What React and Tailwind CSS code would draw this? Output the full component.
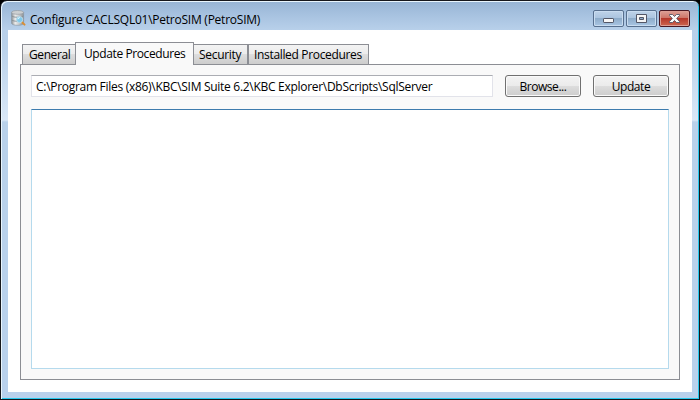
import React from 'react';

function DatabaseIcon() {
  return (
    <svg width="15" height="16" viewBox="0 0 15 16" className="shrink-0">
      <defs>
        <linearGradient id="cyl" x1="0" x2="1">
          <stop offset="0" stopColor="#8d9295" />
          <stop offset=".3" stopColor="#eceded" />
          <stop offset=".6" stopColor="#c9cccf" />
          <stop offset="1" stopColor="#8c9195" />
        </linearGradient>
      </defs>
      <path d="M.6 2.400v10.800c0 1.200 2.800 2.100 6 2.100s6-.9 6-2.100V2.400z" fill="url(#cyl)" stroke="#8896a2" strokeWidth=".7" />
      <ellipse cx="6.600" cy="2.400" rx="6" ry="1.900" fill="#cdd0d2" stroke="#959ca2" strokeWidth=".7" />
      <path d="M.8 6c1.500 1.700 10 1.700 11.600 0M.8 10c1.500 1.700 10 1.700 11.600 0" fill="none" stroke="#858c92" strokeWidth=".9" />
      <path d="M11 12.200l2.500 2.400" stroke="#d98f35" strokeWidth="2" strokeLinecap="round" />
      <circle cx="8.600" cy="9.600" r="3.100" fill="#7fcaec" stroke="#c3dce8" strokeWidth=".9" />
      <path d="M6.900 9.300a2 2 0 0 1 2-1.700" fill="none" stroke="#e9fbff" strokeWidth="1" />
    </svg>
  );
}

const captionBase = 'flex h-[17px] w-[31px] items-center justify-center rounded-[2px] border';
const captionBlue =
  'border-[#576f8e] bg-[linear-gradient(#bfd3e9_0%,#abc4df_46%,#8eacca_50%,#a9c6e4_100%)] shadow-[inset_0_0_0_1px_#c9dcf0]';

function CaptionButtons() {
  return (
    <div className="mt-[9px] flex gap-[2px]">
      <button className={`${captionBase} ${captionBlue}`}>
        <svg width="11" height="11" viewBox="0 0 11 11">
          <rect x=".5" y="5.500" width="10" height="4" rx=".6" fill="#f7f7f7" stroke="#535666" />
        </svg>
      </button>
      <button className={`${captionBase} ${captionBlue}`}>
        <svg width="11" height="9" viewBox="0 0 11 9">
          <path d="M.5 .5h10v8H.5zM3.500 3.500v2h4v-2z" fill="#f4f4f5" fillRule="evenodd" stroke="#535666" />
        </svg>
      </button>
      <button
        className={`${captionBase} border-[#481722] bg-[linear-gradient(#dda097_0%,#ce7568_46%,#b6382b_50%,#cd6650_100%)] shadow-[inset_0_0_0_1px_#dd9e94]`}
      >
        <svg width="11" height="9" viewBox="0 0 11 9">
          <path d="M.5 .5h3L5.500 2.500l2-2h3v1L7.700 4.500l2.800 3v1h-3l-2-2-2 2h-3v-1l2.800-3L.5 1.500z" fill="#fafafa" stroke="#535666" strokeWidth=".9" />
        </svg>
      </button>
    </div>
  );
}

const inactiveTab =
  '-mb-px h-[21px] border border-[#8c8e94] bg-[linear-gradient(#f3f3f3_0%,#ebebeb_50%,#dddddd_50%,#cdcdcd_100%)] pt-px leading-[17px] whitespace-nowrap';

function Tabs() {
  return (
    <div className="flex h-[22px] items-end pl-[2px]">
      <div className={`${inactiveTab} w-[54px] pl-[6px] tracking-[-0.4px]`}>General</div>
      <div className="relative z-10 -mb-px -ml-px h-[23px] w-[119px] border border-b-0 border-[#8c8e94] bg-[#f9f9f9] pt-[2px] pl-[8px] leading-[17px] tracking-[-0.4px] whitespace-nowrap">
        Update Procedures
      </div>
      <div className={`${inactiveTab} -ml-px w-[55px] pl-[5px] tracking-[-0.3px]`}>Security</div>
      <div className={`${inactiveTab} w-[121px] pl-[5px] tracking-[-0.33px]`}>Installed Procedures</div>
    </div>
  );
}

const pushButton =
  'h-[22px] w-[76px] rounded-[3px] border border-[#707070] bg-[linear-gradient(#f3f3f3_0%,#ebebeb_50%,#dddddd_50%,#cdcdcd_100%)] pt-[2px] text-center leading-[18px] tracking-[-0.45px] shadow-[inset_0_0_0_1px_#fafafa]';

export default function App() {
  return (
    <div className="h-[400px] w-[700px] overflow-hidden bg-black font-['Open_Sans','Noto_Sans',sans-serif] text-[12px] text-black">
      <div className="flex h-[400px] flex-col rounded-t-[7px] border border-[#16171c] bg-[linear-gradient(#97b4d4_0px,#a7c2e0_14px,#b8d0ea_29px,#b9d1ea_45px,#d9e7f6_119px,#b9d1ea_121px,#b9d1ec_100%)] shadow-[inset_1px_1px_0_#e9f5fd,inset_-1px_-1px_0_#27c8ed]">
        <header className="flex h-[29px] shrink-0 items-start justify-between pr-[9px] pl-[10px]">
          <div className="flex items-start gap-[4px] pt-[9px]">
            <DatabaseIcon />
            <span className="pt-[2px] leading-[16px] tracking-[-0.24px] whitespace-nowrap">Configure CACLSQL01\PetroSIM (PetroSIM)</span>
          </div>
          <CaptionButtons />
        </header>
        <main className="mx-[7px] h-[362px] bg-white px-[12px] pt-[12px]">
          <Tabs />
          <section className="h-[316px] w-[660px] border border-[#8c8e94] bg-[#f9f9f9] px-[10px] pt-[10px]">
            <div className="flex gap-[12px]">
              <div className="h-[22px] w-[462px] border border-[#e2e3ea] border-t-[#abadb3] bg-white pt-px pl-[4px] leading-[20px] tracking-[-0.29px] whitespace-nowrap">
                C:\Program Files (x86)\KBC\SIM Suite 6.2\KBC Explorer\DbScripts\SqlServer
              </div>
              <button className={pushButton}>Browse...</button>
              <button className={pushButton}>Update</button>
            </div>
            <div className="mt-[12px] h-[260px] w-[638px] border border-[#b5daed] border-t-[#3d7bad] bg-white" />
          </section>
        </main>
      </div>
    </div>
  );
}
